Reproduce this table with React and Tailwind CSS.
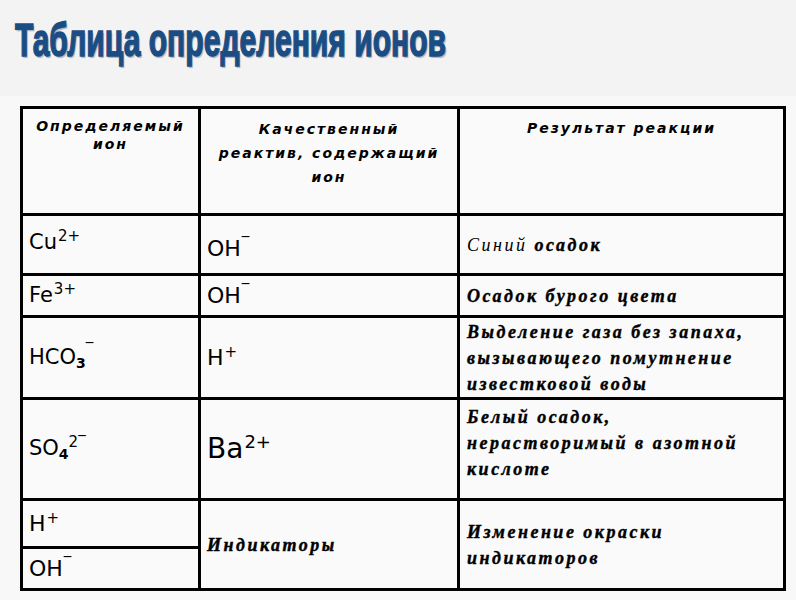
import React from "react";

const ion = "font-['DejaVu_Sans',sans-serif] text-black";
const res = "font-['Liberation_Serif',serif] italic font-bold text-black text-[18px] tracking-[2.5px] leading-[26px] [-webkit-text-stroke:0.4px_#000]";
const head = "font-['DejaVu_Sans',sans-serif] italic font-bold text-black text-[14px] tracking-[2px]";

function Sup({ children }) {
  return <sup className="text-[15px] relative -top-[8px] ml-[1px]">{children}</sup>;
}

export default function App() {
  return (
    <div className="w-[796px] h-[600px] bg-[#f8f8f8] overflow-hidden">
      <div className="h-[96px] bg-[#f3f3f3] pl-[15px] pt-[12px]">
        <div className="inline-block origin-left scale-x-[0.64] whitespace-nowrap font-['Liberation_Sans',sans-serif] font-bold text-[47px] leading-[56px] text-[#1b4d85] [-webkit-text-stroke:1.5px_#1b4d85] [text-shadow:2px_2px_1px_rgba(90,100,120,0.45)]">
          Таблица определения ионов
        </div>
      </div>
      <table className="ml-[20px] mt-[10px] table-fixed border-collapse border-[3px] border-black bg-[#fafafa]">
        <colgroup>
          <col className="w-[178px]" />
          <col className="w-[259px]" />
          <col className="w-[326px]" />
        </colgroup>
        <tbody>
          <tr className="h-[107px]">
            <td className={`border-[3px] border-black align-top text-center pt-[8px] leading-[18px] ${head}`}>
              Определяемый<br />ион
            </td>
            <td className={`border-[3px] border-black align-top text-center pt-[8px] leading-[24px] ${head}`}>
              Качественный<br />реактив, содержащий<br />ион
            </td>
            <td className={`border-[3px] border-black align-top text-center pt-[10px] leading-[18px] ${head}`}>
              Результат реакции
            </td>
          </tr>
          <tr className="h-[60px]">
            <td className={`border-[3px] border-black px-[6px] pb-[4px] text-[21px] ${ion}`}>
              Cu<Sup>2+</Sup>
            </td>
            <td className={`border-[3px] border-black px-[6px] pt-[8px] text-[22px] ${ion}`}>
              OH<Sup>‾</Sup>
            </td>
            <td className={`border-[3px] border-black px-[7px] ${res}`}>
              <span className="font-normal [-webkit-text-stroke:0px]">Синий</span> осадок
            </td>
          </tr>
          <tr className="h-[42px]">
            <td className={`border-[3px] border-black px-[6px] text-[21px] ${ion}`}>
              Fe<Sup>3+</Sup>
            </td>
            <td className={`border-[3px] border-black px-[6px] text-[22px] ${ion}`}>
              OH<Sup>‾</Sup>
            </td>
            <td className={`border-[3px] border-black px-[7px] ${res}`}>
              Осадок бурого цвета
            </td>
          </tr>
          <tr className="h-[82px]">
            <td className={`border-[3px] border-black px-[6px] text-[21px] ${ion}`}>
              HCO<sub className="text-[14px] font-bold relative top-[4px]">3</sub>
              <sup className="text-[15px] relative -top-[10px]">‾</sup>
            </td>
            <td className={`border-[3px] border-black px-[6px] text-[22px] ${ion}`}>
              H<Sup>+</Sup>
            </td>
            <td className={`border-[3px] border-black px-[7px] whitespace-nowrap ${res}`}>
              Выделение газа без запаха,<br />вызывающего помутнение<br />известковой воды
            </td>
          </tr>
          <tr className="h-[101px]">
            <td className={`border-[3px] border-black px-[6px] text-[21px] ${ion}`}>
              SO<sub className="text-[14px] font-bold relative top-[4px]">4</sub>
              <sup className="text-[15px] relative -top-[8px]">2‾</sup>
            </td>
            <td className={`border-[3px] border-black px-[6px] text-[28px] ${ion}`}>
              Ba<sup className="text-[18px] relative -top-[10px] ml-[1px]">2+</sup>
            </td>
            <td className={`border-[3px] border-black px-[7px] align-top pt-[4px] whitespace-nowrap ${res}`}>
              Белый осадок,<br />нерастворимый в азотной<br />кислоте
            </td>
          </tr>
          <tr className="h-[48px]">
            <td className={`border-[3px] border-black px-[6px] text-[22px] ${ion}`}>
              H<Sup>+</Sup>
            </td>
            <td rowSpan={2} className={`border-[3px] border-black px-[6px] ${res}`}>
              Индикаторы
            </td>
            <td rowSpan={2} className={`border-[3px] border-black px-[7px] ${res}`}>
              Изменение окраски<br />индикаторов
            </td>
          </tr>
          <tr className="h-[42px]">
            <td className={`border-[3px] border-black px-[6px] text-[22px] ${ion}`}>
              OH<Sup>‾</Sup>
            </td>
          </tr>
        </tbody>
      </table>
    </div>
  );
}
